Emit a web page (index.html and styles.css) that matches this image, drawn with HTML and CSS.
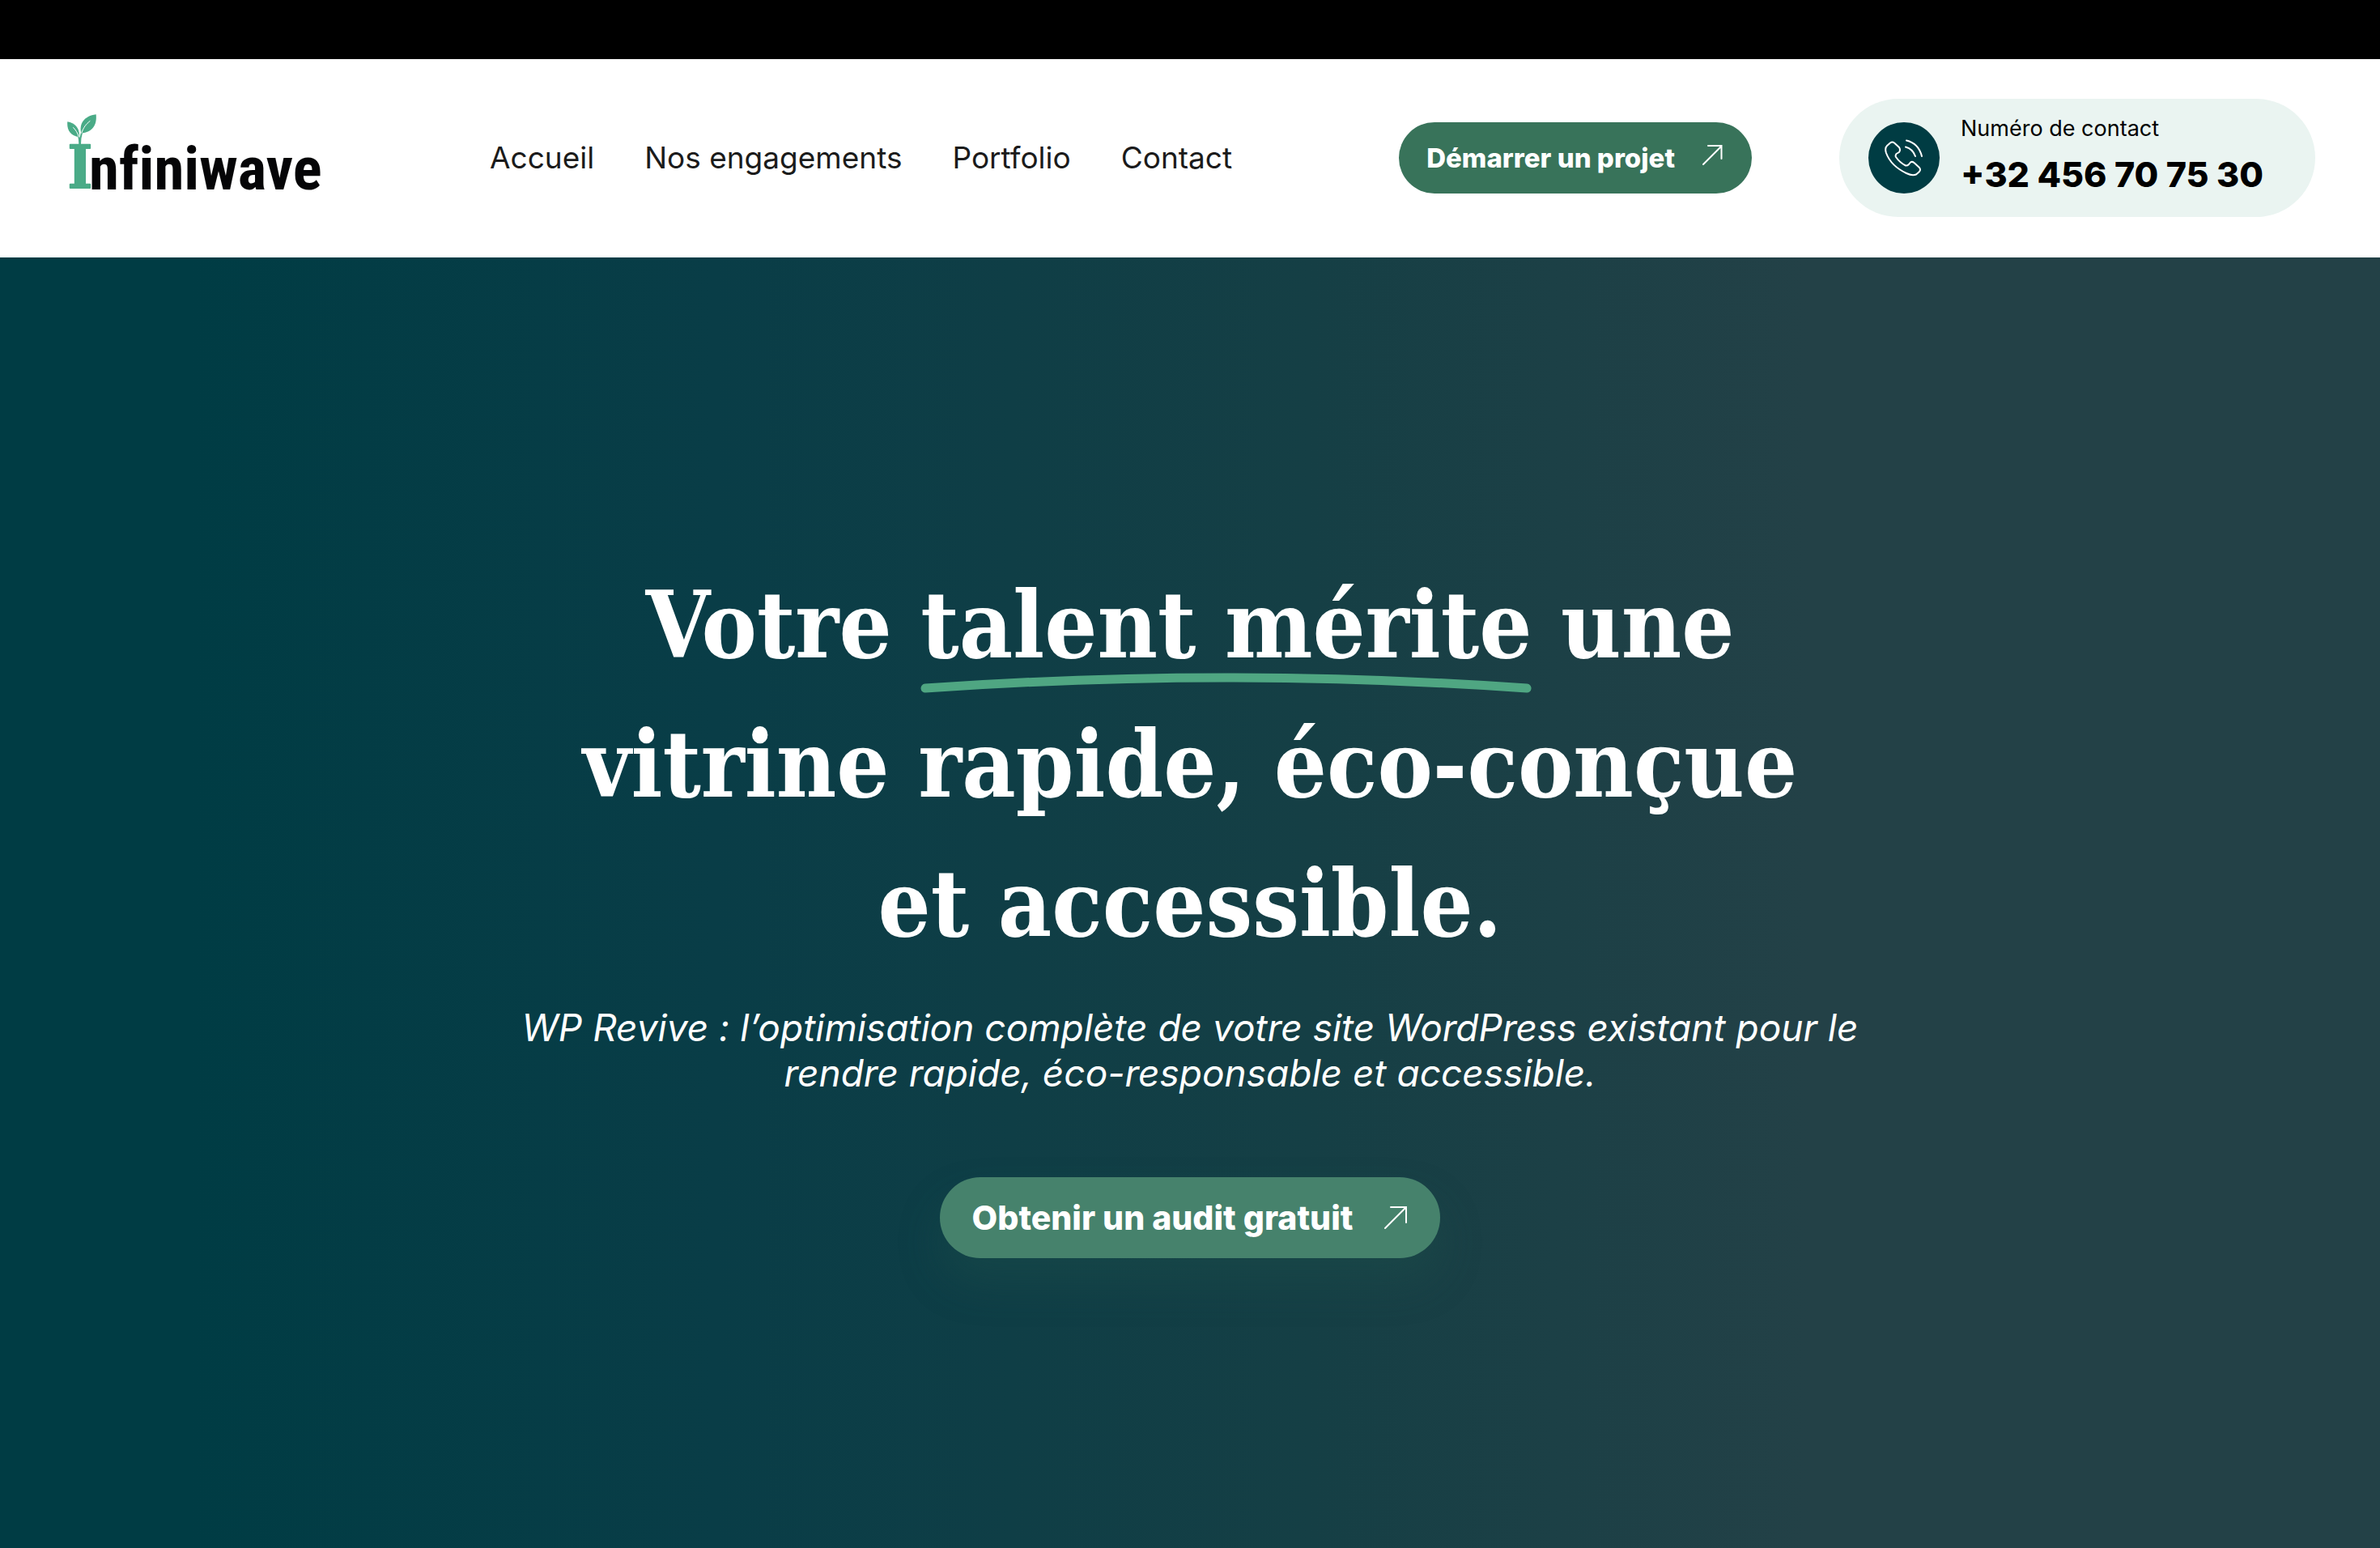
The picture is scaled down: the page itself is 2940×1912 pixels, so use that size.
FILE: index.html
```html
<!DOCTYPE html>
<html lang="fr">
<head>
  <meta charset="utf-8">
  <meta name="viewport" content="width=device-width, initial-scale=1">
  <title>Infiniwave</title>
  <link rel="stylesheet" href="styles.css">
</head>
<body>
  <div class="topbar"></div>

  <header class="header">
    <div class="header-group header-group-main">
      <a class="logo" href="#" aria-label="Infiniwave, accueil">
        <svg width="318" height="120" viewBox="0 0 318 120">
          <g transform="translate(-23 -15) scale(.3333)">
            <path class="logo-leaf" d="M121 134C112 98 132 70 176 64C180 103 163 130 121 134Z"/>
            <path class="logo-leaf" d="M113 148C80 143 67 120 70 91C100 96 117 118 113 148Z"/>
            <path class="logo-stem" d="M115 174C115 160 114 152 111 144M117 174C117 156 119 144 123 131"/>
            <path class="logo-vein" d="M154 88C140 99 129 112 122 134M91 112C101 122 108 133 112 148"/>
          </g>
          <text class="logo-initial" x="16" y="97">I</text>
          <text class="logo-name" x="27" y="99">nfiniwave</text>
        </svg>
      </a>
      <nav class="nav">
        <a href="#">Accueil</a>
        <a href="#">Nos engagements</a>
        <a href="#">Portfolio</a>
        <a href="#">Contact</a>
      </nav>
    </div>

    <div class="header-group header-group-side">
      <a class="button button-small" href="#">
        Démarrer un projet
        <svg width="26" height="34" viewBox="0 0 26 34"><path d="M2 25L24 3M8 2H24.500V18"/></svg>
      </a>
      <a class="contact" href="tel:+32456707530">
        <span class="contact-icon">
          <svg width="48" height="48" viewBox="0 0 48 48">
            <path d="M3 9L7 5.500Q9.500 3.500 12 5.500L18 11Q20 14 18 17L14.500 19Q13 21 14 23Q19 30 26 33.500Q28 34 30 32L32 29.500Q34 28 36.500 30L43 36Q45 38.500 43 41L39 44.500Q34 46.500 27 43Q8 34 2 18Q0 12 3 9Z"/>
            <path d="M27 2.500Q42 6 46 22M26 10.500Q35 13 38 22"/>
          </svg>
        </span>
        <span class="contact-text">
          <span class="contact-label">Numéro de contact</span>
          <strong class="contact-number">+32 456 70 75 30</strong>
        </span>
      </a>
    </div>
  </header>

  <main class="hero">
    <h1 class="hero-title">Votre <span class="underlined">talent mérite<svg viewBox="0 0 758 26" preserveAspectRatio="none" aria-hidden="true"><path d="M6 19Q379 -7 752 19"/></svg></span> une vitrine rapide, éco-conçue et&nbsp;accessible.</h1>
    <p class="hero-text">WP Revive : l’optimisation complète de votre site WordPress existant pour le rendre rapide, éco-responsable et accessible.</p>
    <a class="button button-large" href="#">
      Obtenir un audit gratuit
      <svg width="30" height="30" viewBox="0 0 30 30"><path d="M2 28L28 2M9 2H28V21"/></svg>
    </a>
  </main>
</body>
</html>
```
FILE: styles.css
```css
* {
  box-sizing: border-box;
}

body {
  margin: 0;
  min-height: 100vh;
  display: flex;
  flex-direction: column;
  font-family: "Inter", "Liberation Sans", sans-serif;
  color: #1b1b1b;
  background: #fff;
}

a {
  color: inherit;
  text-decoration: none;
}

svg {
  display: block;
  flex: none;
}

.topbar {
  height: 73px;
  background: #000;
}

/* Header */
.header {
  display: flex;
  justify-content: space-between;
  align-items: center;
  padding: 49px 80px 50px 83px;
}

.header-group {
  display: flex;
  align-items: center;
}

.header-group-main {
  gap: 204px;
}

.header-group-side {
  gap: 108px;
}

.logo-leaf {
  fill: #4aab87;
}

.logo-stem {
  fill: none;
  stroke: #4aab87;
  stroke-width: 6;
}

.logo-vein {
  fill: none;
  stroke: #fff;
  stroke-width: 3;
}

.logo-initial {
  font: 700 72px "DejaVu Serif Condensed", "DejaVu Serif", serif;
  fill: #4aab87;
  stroke: #4aab87;
  stroke-width: 2;
  stroke-linejoin: round;
  text-anchor: middle;
}

.logo-name {
  font: 700 75px "Roboto Condensed", "Roboto", sans-serif;
  font-variant-ligatures: none;
  fill: #050507;
}

.nav {
  display: flex;
  gap: 62px;
  font-size: 37px;
  line-height: 48px;
}

/* Buttons */
.button {
  display: flex;
  align-items: center;
  border-radius: 50px;
  color: #fff;
  font-weight: 800;
  white-space: nowrap;
}

.button svg {
  fill: none;
  stroke: #fff;
  stroke-width: 2;
  stroke-linecap: round;
}

.button-small {
  gap: 33px;
  padding: 22px 36px 22px 34px;
  font-size: 33px;
  line-height: 44px;
  background: #38735a;
}

.button-large {
  gap: 38px;
  padding: 24px 40px;
  font-size: 41px;
  line-height: 52px;
  background: #46826c;
  box-shadow: 0 30px 50px rgba(32, 84, 76, 0.35);
}

/* Contact pill */
.contact {
  display: flex;
  align-items: center;
  gap: 26px;
  padding: 17px 64px 17px 36px;
  border-radius: 73px;
  background: #eaf4f1;
  color: #000;
  white-space: nowrap;
}

.contact-icon {
  display: grid;
  place-items: center;
  width: 88px;
  height: 88px;
  border-radius: 50%;
  background: #003c43;
}

.contact-icon svg {
  fill: none;
  stroke: #fff;
  stroke-width: 2;
  stroke-linecap: round;
  stroke-linejoin: round;
}

.contact-text {
  display: flex;
  flex-direction: column;
}

.contact-label {
  font-size: 27px;
  line-height: 40px;
}

.contact-number {
  font-size: 43px;
  font-weight: 800;
  line-height: 72px;
}

/* Hero */
.hero {
  flex: 1;
  display: flex;
  flex-direction: column;
  align-items: center;
  padding: 368px 80px 80px;
  color: #fff;
  text-align: center;
  background: linear-gradient(90deg, #003c44 8%, #093d47 30%, #153f45 55%, #234147 76%);
}

.hero-title {
  max-width: 1600px;
  margin: 0;
  font: 700 114px/172px "DejaVu Serif Condensed", "DejaVu Serif", serif;
}

.underlined {
  position: relative;
  white-space: nowrap;
}

.underlined svg {
  position: absolute;
  left: 0;
  bottom: -18px;
  width: 100%;
  height: 26px;
  fill: none;
  stroke: #4fa682;
  stroke-width: 11;
  stroke-linecap: round;
}

.hero-text {
  max-width: 1700px;
  margin: 39px 0 101px;
  font-size: 46px;
  font-style: italic;
  line-height: 56px;
}
```
